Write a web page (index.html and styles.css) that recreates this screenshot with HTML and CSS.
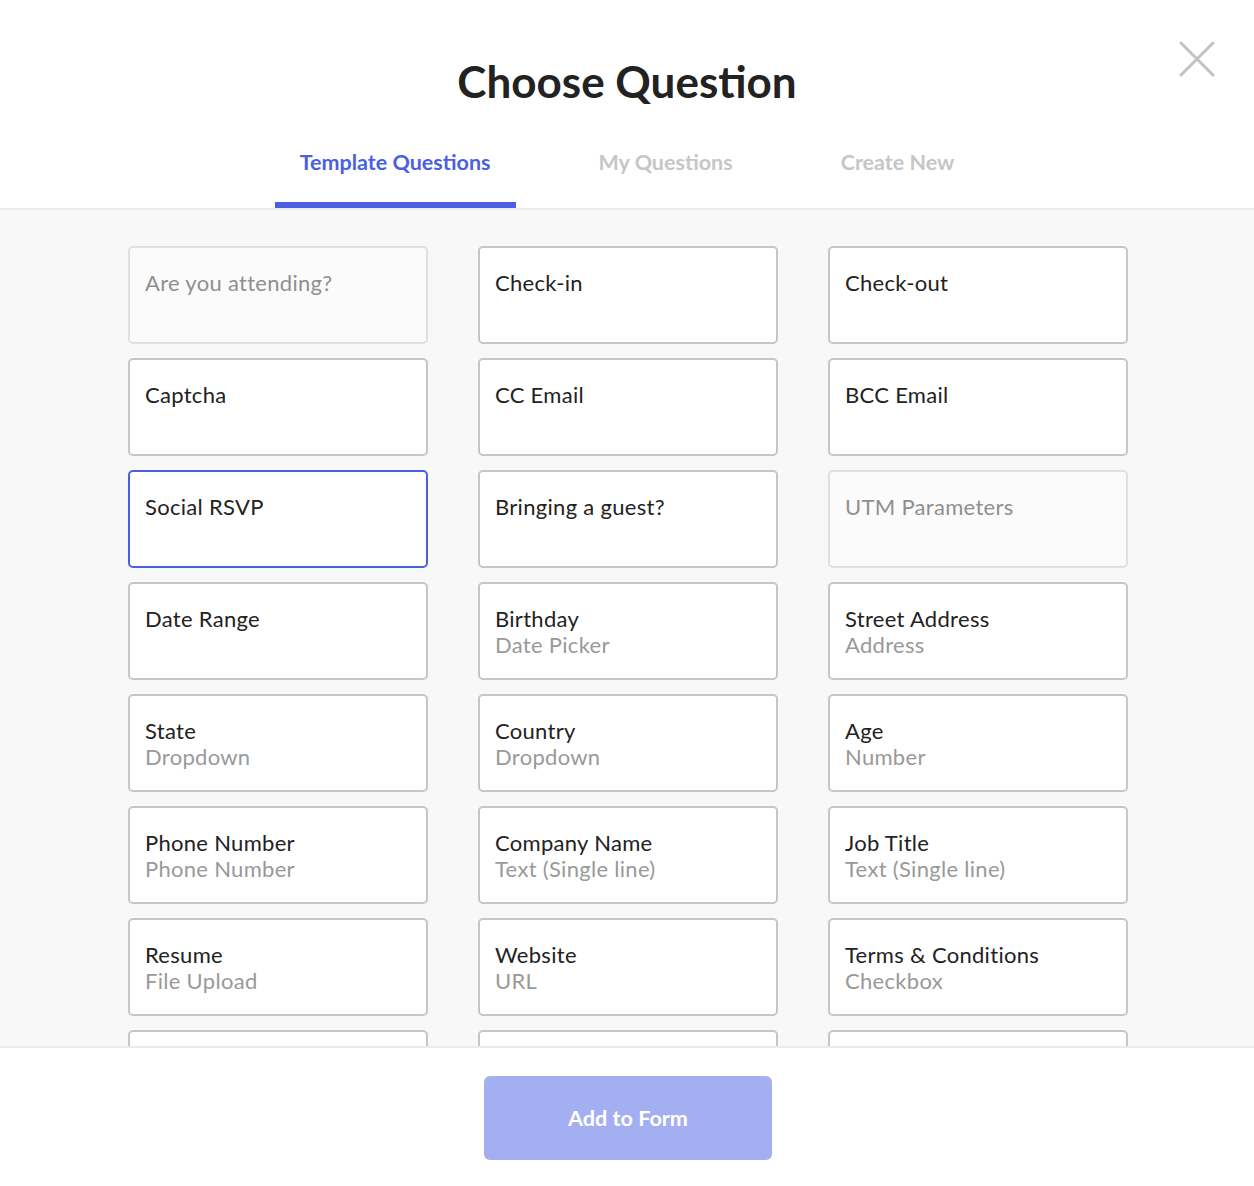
FILE: index.html
```html
<!DOCTYPE html>
<html lang="en">
<head>
<meta charset="utf-8">
<title>Choose Question</title>
<link rel="stylesheet" href="styles.css">
</head>
<body>
<div class="modal">
  <header class="header">
    <h1 class="title">Choose Question</h1>
    <button class="close" aria-label="Close">
      <svg width="36" height="36" viewBox="0 0 36 36"><path d="M2 2L34 34M34 2L2 34" stroke="#c2c2c2" stroke-width="3" stroke-linecap="round" fill="none"/></svg>
    </button>
    <nav class="tabs">
      <a class="tab active">Template Questions</a>
      <a class="tab">My Questions</a>
      <a class="tab">Create New</a>
    </nav>
  </header>
  <main class="content">
    <div class="grid">
      <div class="card disabled"><div class="name">Are you attending?</div></div>
      <div class="card"><div class="name">Check-in</div></div>
      <div class="card"><div class="name">Check-out</div></div>

      <div class="card"><div class="name">Captcha</div></div>
      <div class="card"><div class="name">CC Email</div></div>
      <div class="card"><div class="name">BCC Email</div></div>

      <div class="card selected"><div class="name">Social RSVP</div></div>
      <div class="card"><div class="name">Bringing a guest?</div></div>
      <div class="card disabled"><div class="name">UTM Parameters</div></div>

      <div class="card"><div class="name">Date Range</div></div>
      <div class="card"><div class="name">Birthday</div><div class="type">Date Picker</div></div>
      <div class="card"><div class="name">Street Address</div><div class="type">Address</div></div>

      <div class="card"><div class="name">State</div><div class="type">Dropdown</div></div>
      <div class="card"><div class="name">Country</div><div class="type">Dropdown</div></div>
      <div class="card"><div class="name">Age</div><div class="type">Number</div></div>

      <div class="card"><div class="name">Phone Number</div><div class="type">Phone Number</div></div>
      <div class="card"><div class="name">Company Name</div><div class="type">Text (Single line)</div></div>
      <div class="card"><div class="name">Job Title</div><div class="type">Text (Single line)</div></div>

      <div class="card"><div class="name">Resume</div><div class="type">File Upload</div></div>
      <div class="card"><div class="name">Website</div><div class="type">URL</div></div>
      <div class="card"><div class="name">Terms &amp; Conditions</div><div class="type">Checkbox</div></div>

      <div class="card blank"></div>
      <div class="card blank"></div>
      <div class="card blank"></div>
    </div>
  </main>
  <footer class="footer">
    <button class="add">Add to Form</button>
  </footer>
</div>
</body>
</html>
```

FILE: styles.css
```css
* { box-sizing: border-box; }
html, body { margin: 0; height: 100%; }
body {
  font-family: Lato, "Open Sans", "Liberation Sans", sans-serif;
  color: #222;
  background: #fff;
}
.modal {
  height: 1186px;
  display: flex;
  flex-direction: column;
  overflow: hidden;
}
.header {
  position: relative;
  background: #fff;
  border-bottom: 2px solid #ebebeb;
  display: flex;
  flex-direction: column;
  align-items: center;
}
.title {
  margin: 54px 0 0;
  font-size: 44px;
  line-height: 54px;
  font-weight: 700;
  color: #222;
}
.close {
  position: absolute;
  top: 41px;
  right: 39px;
  padding: 0;
  border: 0;
  background: none;
  width: 36px;
  height: 36px;
}
.close svg { display: block; }
.tabs {
  display: flex;
  gap: 58px;
  margin-top: 30px;
}
.tab {
  display: block;
  padding: 11px 25px 27px;
  font-size: 21.5px;
  line-height: 26px;
  font-weight: 700;
  color: #c6c6c6;
  border-bottom: 6px solid transparent;
}
.tab.active {
  color: #4a5fe2;
  border-bottom-color: #4a5fe2;
}
.content {
  flex: 1;
  background: #f8f8f8;
  overflow: hidden;
  min-height: 0;
}
.grid {
  width: 1000px;
  margin: 36px auto 0;
  display: grid;
  grid-template-columns: repeat(3, 300px);
  column-gap: 50px;
  row-gap: 14px;
  transform: translateX(1px);
}
.card {
  height: 98px;
  background: #fff;
  border: 2px solid #c6c6c6;
  border-radius: 5px;
  padding: 22px 15px 0;
  font-size: 22px;
  line-height: 26px;
  letter-spacing: 0.3px;
}
.card .name { color: #222; }
.card .type { color: #999; }
.card.disabled {
  background: #fbfbfb;
  border-color: #e0e0e0;
}
.card.disabled .name { color: #8f8f8f; }
.card.selected {
  border-color: #4a5fe2;
}
.footer {
  height: 140px;
  border-top: 2px solid #ebebeb;
  background: #fff;
  display: flex;
  justify-content: center;
  padding-top: 28px;
}
.add {
  width: 288px;
  height: 84px;
  border: 0;
  border-radius: 6px;
  background: #a4aff2;
  color: #fff;
  font-family: inherit;
  font-size: 21.6px;
  font-weight: 700;
  transform: translateX(1px);
}
```
